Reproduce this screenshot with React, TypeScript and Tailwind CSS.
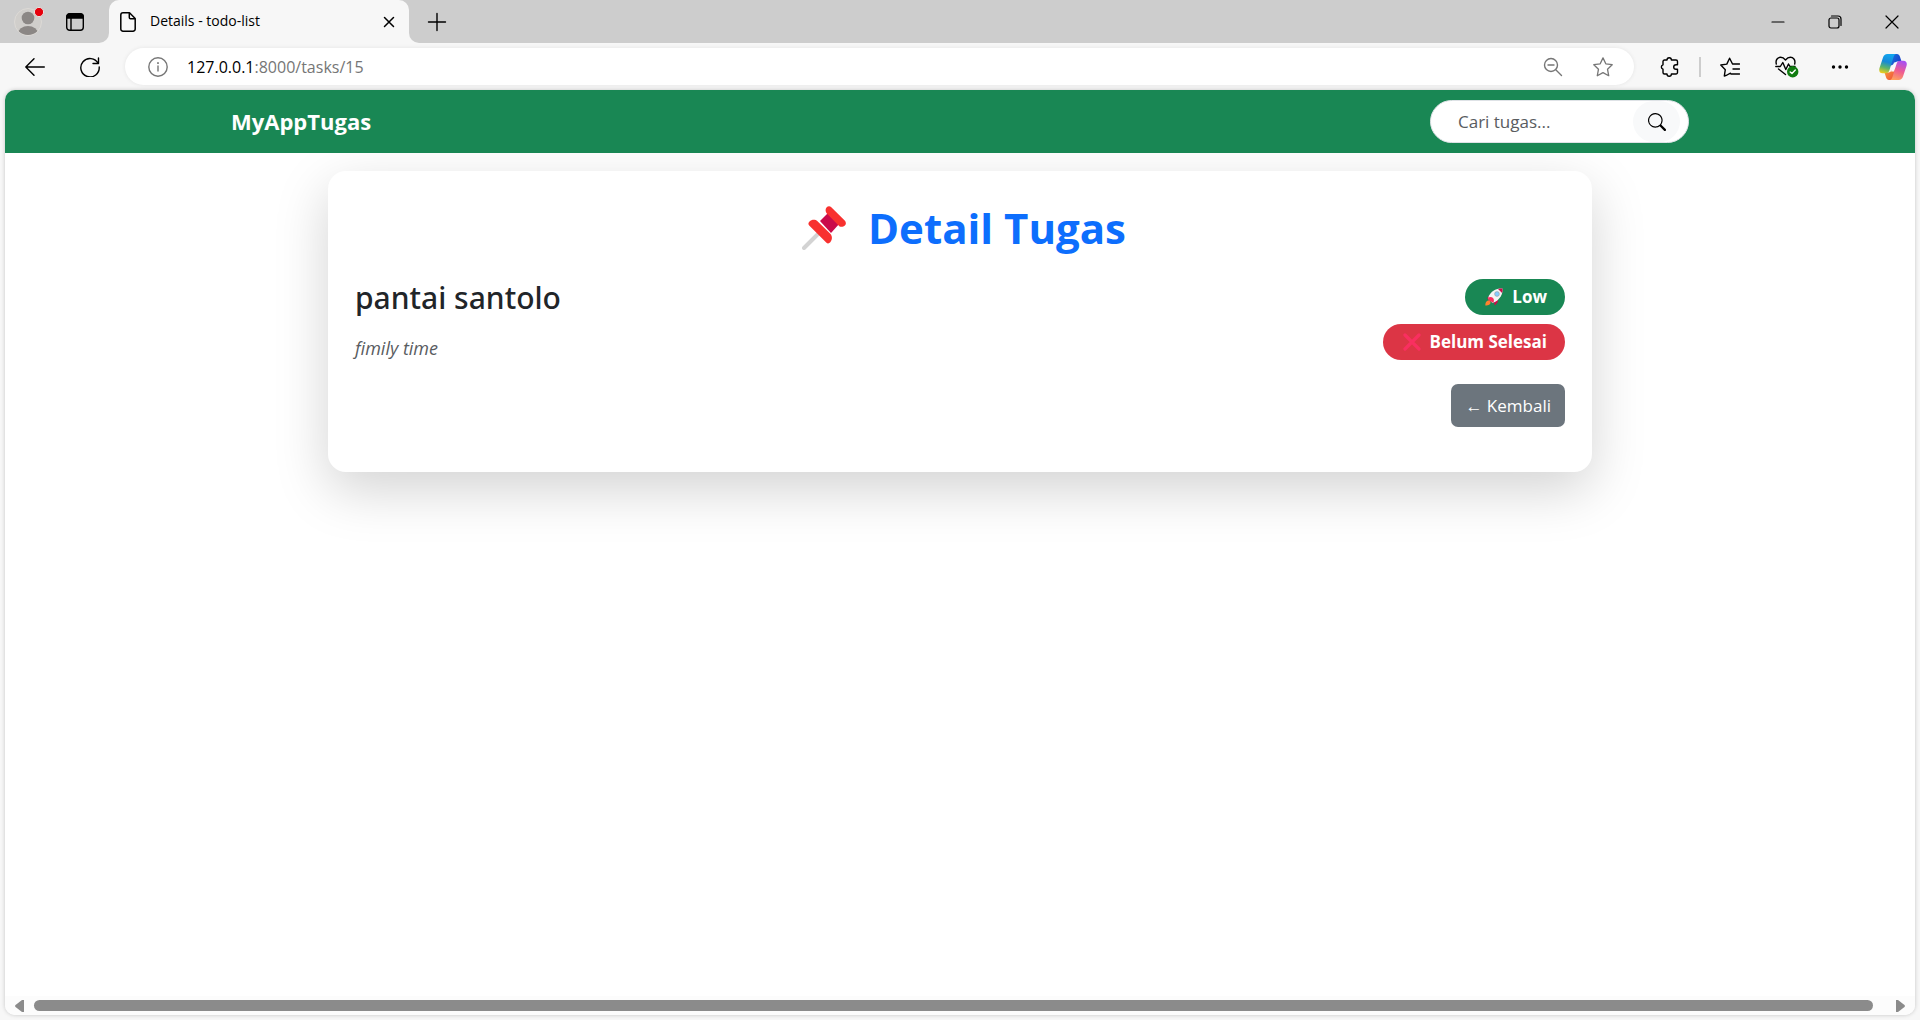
import type { ReactNode } from 'react';

const iconButton = 'flex shrink-0 items-center justify-center rounded';

function Line({ children, size = 20, className = '', width = 1.4 }: { children: ReactNode; size?: number; className?: string; width?: number }) {
  return (
    <svg viewBox={`0 0 ${size} ${size}`} width={size} height={size} fill="none" stroke="currentColor" strokeWidth={width} strokeLinecap="round" strokeLinejoin="round" className={className} aria-hidden="true">
      {children}
    </svg>
  );
}

function Avatar() {
  return (
    <svg width="36" height="36" viewBox="0 0 36 36" aria-hidden="true">
      <defs>
        <clipPath id="face"><circle cx="18" cy="18" r="13" /></clipPath>
      </defs>
      <circle cx="18" cy="18" r="13.5" fill="#d0cecb" stroke="#dddad6" />
      <g clipPath="url(#face)" fill="#8b8785">
        <circle cx="18" cy="14" r="6.3" />
        <ellipse cx="18" cy="29.5" rx="10" ry="7.5" />
      </g>
      <circle cx="29" cy="8" r="4.6" fill="#e6000c" stroke="#e6e2e0" strokeWidth="1" />
    </svg>
  );
}

function Copilot() {
  return (
    <svg width="28" height="26" viewBox="0 0 28 26" aria-hidden="true">
      <defs>
        <linearGradient id="cpA" x1="0.5" y1="0" x2="0.25" y2="1">
          <stop offset="0" stopColor="#12a5ee" />
          <stop offset="0.4" stopColor="#1689d8" />
          <stop offset="0.7" stopColor="#5bb46c" />
          <stop offset="1" stopColor="#f3cc1c" />
        </linearGradient>
        <linearGradient id="cpB" x1="0.6" y1="0" x2="0.3" y2="1">
          <stop offset="0" stopColor="#a950f0" />
          <stop offset="0.5" stopColor="#ee5b93" />
          <stop offset="1" stopColor="#ffa25c" />
        </linearGradient>
        <linearGradient id="cpC" x1="0" y1="0" x2="1" y2="0.6">
          <stop offset="0" stopColor="#1a78dd" />
          <stop offset="1" stopColor="#1b3fcb" />
        </linearGradient>
        <linearGradient id="cpD" x1="0" y1="0" x2="1" y2="1">
          <stop offset="0" stopColor="#f9a13a" />
          <stop offset="1" stopColor="#ee4a3b" />
        </linearGradient>
      </defs>
      <path d="M14 0h4c1.500 0 2.400 1 2.900 2.500L22.500 7.500H19.500c-2 0-3.500.5-4.300 2.500L11 12z" fill="url(#cpC)" />
      <path d="M14 26h-4c-1.500 0-2.400-1-2.900-2.500L5.500 18.500H8.500c2 0 3.500-.5 4.300-2.500L17 14z" fill="url(#cpD)" />
      <path d="M12.500 15.500 15 8.500h3l-2.800 9h-3z" fill="#fbf7fb" />
      <path d="M8.500 0H17c-1.500.3-2 1.700-2.500 3.200l-4 12.800c-.7 2.200-1.700 3.300-4 3.300H3.600C.5 19.300-.3 17 .5 14L4 3.500C4.800 1.200 6 0 8.500 0z" fill="url(#cpA)" />
      <path d="M19.500 26H11c1.500-.3 2-1.700 2.500-3.200l4-12.800c.7-2.200 1.700-3.300 4-3.300h2.900c3.100 0 3.900 2.300 3.100 5.300L24 22.500c-.8 2.300-2 3.500-4.500 3.500z" fill="url(#cpB)" />
    </svg>
  );
}

function Pushpin() {
  return (
    <svg width="44" height="44" viewBox="0 0 44 44" role="img" aria-label="Pin">
      <path d="M2 42 18 26" stroke="#d3d3d3" strokeWidth="4" strokeLinecap="round" />
      <path d="m18 15 9-9 11 11-9 10z" fill="#ca0b4a" />
      <path d="M24.500 1.500c1.300-1.600 3.400-1.700 4.800-.3l13.400 13.300c1.500 1.600 1.600 3.700.2 5-1.400 1.300-3.600 1.500-5.300.9L24.800 7.600c-1.400-1.800-1.700-4.500-.3-6.100z" fill="#f8312f" />
      <path d="M7.500 15.500c2-2 5.500-2.600 8-.3l12.800 12.600c2.500 2.700 1.900 6.200 0 8.500-1 1.300-2.800 1.600-4.100.3L7.200 19.500c-1.200-1.300-1-2.800.3-4z" fill="#f8312f" />
    </svg>
  );
}

function Rocket() {
  return (
    <svg width="18" height="18" viewBox="0 0 18 18" role="img" aria-label="Rocket">
      <path d="m4 8 3-2.500L9 6 5 11 2 10.500zM10 13l2.500-3 .4 4-3 3.500-.8-2z" fill="#ca0b4a" />
      <path d="M4 7.500C7 2.500 12 0 17.500.5 18 6 15 11 10.300 13.800L7.500 15 3 10.500z" fill="#f4f4f4" />
      <path d="M13 .9C14.500.4 16 .3 17.500.5c.2 1.500.1 3-.4 4.500z" fill="#ca0b4a" />
      <circle cx="12" cy="6" r="2.400" fill="#83cbff" stroke="#9b9b9b" strokeWidth=".6" />
      <path d="M3 9.500C5 8.500 7 8.800 8 10c1.200 1.200 1.200 3 .3 5L6 13.500l-2.500-1z" fill="#f92f60" />
      <path d="M1.500 13.500c1-1.300 2.700-1.200 3.500-.3s.7 2.500-.5 3.300c-1 .7-2.500 1-4.200 1 0-1.500.3-3 1.200-4z" fill="#ff822d" />
    </svg>
  );
}

function BrowserChrome() {
  return (
    <header className="bg-[#f7f7f7] text-black">
      <div className="flex h-[43px]">
        <div className="flex w-[109px] items-center gap-5 rounded-br-[10px] bg-[#cdcdcd] pl-[10px]">
          <button type="button" aria-label="Profile" className={iconButton}><Avatar /></button>
          <button type="button" aria-label="Tab actions" className={iconButton}>
            <svg width="18" height="18" viewBox="0 0 18 18" fill="none" stroke="black" strokeWidth="1.400" aria-hidden="true">
              <rect x=".7" y=".7" width="16.600" height="16.600" rx="3" />
              <path d="M5 5v12" />
              <path d="M1 5V3.500A2.500 2.500 0 0 1 3.500 1h11A2.500 2.500 0 0 1 17 3.500V5z" fill="black" />
            </svg>
          </button>
        </div>
        <div className="w-[300px] bg-[#cdcdcd]">
          <div className="flex h-full items-center rounded-t-[10px] bg-[#f7f7f7] pr-2 pl-[11px]">
            <svg width="16" height="20" viewBox="0 0 16 20" fill="none" stroke="black" strokeWidth="1.500" strokeLinejoin="round" aria-hidden="true">
              <path d="M3 .8h6.500L15.200 6.500V17a2.200 2.200 0 0 1-2.200 2.200H3A2.200 2.200 0 0 1 .8 17V3A2.200 2.200 0 0 1 3 .8z" />
              <path d="M9.300 1v4.500a1.200 1.200 0 0 0 1.200 1.200H15" />
            </svg>
            <span className="ml-[14px] flex-1 pb-0.5 text-[14px] leading-5">Details - todo-list</span>
            <button type="button" aria-label="Close tab" className={`${iconButton} size-6`}>
              <Line size={12} width={1.5}><path d="m1.500 1.500 9 9m0-9-9 9" /></Line>
            </button>
          </div>
        </div>
        <div className="flex flex-1 items-center rounded-bl-[10px] bg-[#cdcdcd] px-[18px]">
          <button type="button" aria-label="New tab" className={iconButton}><Line><path d="M10 1.500v17M1.500 10h17" /></Line></button>
          <div className="ml-auto flex gap-[37px]">
            <button type="button" aria-label="Minimize" className={iconButton}><Line width={1.2}><path d="M4 10h12" /></Line></button>
            <button type="button" aria-label="Restore" className={iconButton}>
              <Line width={1.2}><rect x="4" y="6" width="10" height="10" rx="2" /><path d="M6.500 4H13a3 3 0 0 1 3 3v6.500" /></Line>
            </button>
            <button type="button" aria-label="Close window" className={iconButton}><Line width={1.2}><path d="m4 4 12 12m0-12L4 16" /></Line></button>
          </div>
        </div>
      </div>

      <div className="flex h-[47px] items-center pr-[13px] pl-[25px]">
        <button type="button" aria-label="Back" className={iconButton}><Line><path d="M19.300 10H.8M9 1.700.8 10 9 18.300" /></Line></button>
        <button type="button" aria-label="Refresh" className={`${iconButton} ml-[35px]`}>
          <Line><path d="M18.200 6.500A9.200 9.200 0 1 0 19.200 10M18.500 1v5.500H13" /></Line>
        </button>
        <form className="ml-[25px] flex h-[37px] flex-1 items-center rounded-full bg-white pr-[21px] pl-[23px] shadow-[0_0_4px_rgba(0,0,0,0.08)]" onSubmit={(e) => e.preventDefault()}>
          <button type="button" aria-label="Site information" className={`${iconButton} text-[#767676]`}>
            <Line><circle cx="10" cy="10" r="9.200" /><path d="M10 9v5" /><path d="M10 6v.2" strokeWidth="1.800" /></Line>
          </button>
          <p className="ml-[19px] flex-1 text-[16px] leading-6 text-[#767676]"><span className="text-black">127.0.0.1</span>:8000/tasks/15</p>
          <button type="button" aria-label="Zoom" className={`${iconButton} text-[#767676]`}>
            <Line><circle cx="8" cy="8" r="6.500" /><path d="m13 13 5.500 5.500M5 8h6" /></Line>
          </button>
          <button type="button" aria-label="Add to favorites" className={`${iconButton} ml-[30px] text-[#767676]`}>
            <Line width={1.3}><path d="m10 .9 2.800 5.900 6.400.9-4.700 4.500 1.200 6.500-5.700-3.100-5.700 3.100 1.200-6.500L.8 7.700l6.400-.9z" /></Line>
          </button>
        </form>
        <button type="button" aria-label="Extensions" className={`${iconButton} ml-[25px]`}>
          <Line><path d="M5.500 3H8a2.200 2.200 0 0 1 4.400 0H17a1.500 1.500 0 0 1 1.500 1.500V7.700H17a2.300 2.300 0 0 0 0 4.600h1.500v3.200A1.500 1.500 0 0 1 17 17h-4.600a2.200 2.200 0 0 1-4.400 0H5.500A1.500 1.500 0 0 1 4 15.500v-3.300a2.300 2.300 0 0 1 0-4.400V4.500A1.500 1.500 0 0 1 5.500 3z" /></Line>
        </button>
        <div className="ml-5 h-5 w-0.5 bg-[#cdcdcd]" />
        <button type="button" aria-label="Favorites" className={`${iconButton} ml-[19px]`}>
          <Line><path d="M6.900 18.100 4.300 19l1-6.300L.8 8l6-.9L9.600 1.200l2.800 5.600M12.500 7h7M13 12h6.500M11 17h8.500M10.500 16.200 6 18.500" /></Line>
        </button>
        <button type="button" aria-label="Browser essentials" className={`${iconButton} ml-[35px]`}>
          <svg width="24" height="22" viewBox="0 0 24 22" fill="none" stroke="black" strokeWidth="1.400" strokeLinecap="round" strokeLinejoin="round" aria-hidden="true">
            <path d="M1.300 8C.2 3.600 3 1.300 5.600 1.300c2 0 3.400.9 4.900 2.700 1.500-1.800 2.900-2.700 4.900-2.700C18 1.300 20.800 3.600 19.700 8M.8 10.500h4.500l2.500-4 3 7L13.500 8l1.500 2.500h5M3.500 13l7 5.500" />
            <circle cx="17.700" cy="15.700" r="5.700" fill="#107c10" stroke="none" />
            <path d="m15.200 15.900 1.800 1.700 3.300-3.500" stroke="white" />
          </svg>
        </button>
        <button type="button" aria-label="Settings and more" className={`${iconButton} ml-[31px]`}>
          <svg width="20" height="20" viewBox="0 0 20 20" aria-hidden="true"><circle cx="3.500" cy="10" r="1.700" /><circle cx="10" cy="10" r="1.700" /><circle cx="16.500" cy="10" r="1.700" /></svg>
        </button>
        <button type="button" aria-label="Copilot" className={`${iconButton} ml-[29px]`}><Copilot /></button>
      </div>
    </header>
  );
}

export default function App() {
  return (
    <div className="flex min-h-screen flex-col bg-[#f7f7f7] font-['Open_Sans','Noto_Sans',sans-serif]">
      <BrowserChrome />
      <div className="mx-[5px] mb-[5px] flex flex-1 flex-col overflow-hidden rounded-[10px] bg-white text-[17px] text-[#212529] shadow-[0_0_4px_rgba(0,0,0,0.2)]">
        <nav className="relative z-10 bg-[#198754]">
          <div className="mx-auto flex h-[63px] max-w-[1458px] items-center justify-between">
            <a href="#" className="pb-0.5 text-[22px] leading-8 font-bold text-white">MyAppTugas</a>
            <form role="search" className="flex h-[43px] w-[259px] rounded-full border border-[#dee2e6] bg-white pr-2 pl-[27px]" onSubmit={(e) => e.preventDefault()}>
              <input type="search" aria-label="Cari tugas" placeholder="Cari tugas..." className="min-w-0 flex-1 bg-transparent outline-none placeholder:text-[#595c5f]" />
              <button type="submit" aria-label="Cari" className="flex w-[47px] items-center justify-center rounded-full bg-[#f8f9fa] text-black">
                <svg width="18" height="18" viewBox="0 0 16 16" fill="currentColor" aria-hidden="true">
                  <path d="M11.742 10.344a6.500 6.500 0 1 0-1.397 1.398h-.001q.044.060.098.115l3.850 3.850a1 1 0 0 0 1.415-1.414l-3.850-3.850a1 1 0 0 0-.115-.1zM12 6.500a5.500 5.500 0 1 1-11 0 5.500 5.500 0 0 1 11 0" />
                </svg>
              </button>
            </form>
          </div>
        </nav>

        <main className="flex-1">
          <section className="mx-auto mt-[18px] max-w-[1264px] rounded-[18px] bg-white px-[27px] pt-[30px] pb-[45px] shadow-[0_18px_54px_rgba(0,0,0,0.175)]">
            <h1 className="flex items-center justify-center gap-[22px] pl-2 text-[42px] leading-[54px] font-bold text-[#0d6efd]">
              <Pushpin />
              Detail Tugas
            </h1>
            <div className="mt-6 flex justify-between">
              <div>
                <h2 className="font-['Noto_Sans','Open_Sans',sans-serif] text-[30px] leading-[38px] font-medium">pantai santolo</h2>
                <p className="mt-[18px] text-[18px] leading-[27px] text-[#595c5f] italic">fimily time</p>
              </div>
              <div className="flex flex-col items-end gap-[9px] font-bold text-white">
                <span className="flex h-9 items-center gap-[9px] rounded-full bg-[#198754] pr-[18px] pl-5"><Rocket />Low</span>
                <span className="flex h-9 items-center gap-[9px] rounded-full bg-[#dc3545] pr-[18px] pl-5">
                  <svg width="18" height="18" viewBox="0 0 18 18" stroke="#f92f60" strokeWidth="3.200" strokeLinecap="round" role="img" aria-label="Cross"><path d="m2 2 14 14m0-14L2 16" /></svg>
                  Belum Selesai
                </span>
              </div>
            </div>
            <div className="mt-[22px] flex justify-end">
              <a href="#" className="rounded-[7px] bg-[#6c757d] px-[14px] py-2 leading-[27px] text-white">← Kembali</a>
            </div>
          </section>
        </main>

        <div className="flex h-[19px] items-center bg-[#fcfcfc] px-[10px]" aria-hidden="true">
          <svg width="9" height="12" viewBox="0 0 9 12" fill="#8b8b8b"><path d="M9 0v12H7L.5 7Q-.3 6 .5 5L7 0z" /></svg>
          <div className="mr-[23px] ml-[10px] h-[11px] flex-1 rounded-full bg-[#8b8b8b]" />
          <svg width="9" height="12" viewBox="0 0 9 12" fill="#8b8b8b"><path d="M0 0v12h2l6.500-5q.8-1 0-2L2 0z" /></svg>
        </div>
      </div>
    </div>
  );
}
